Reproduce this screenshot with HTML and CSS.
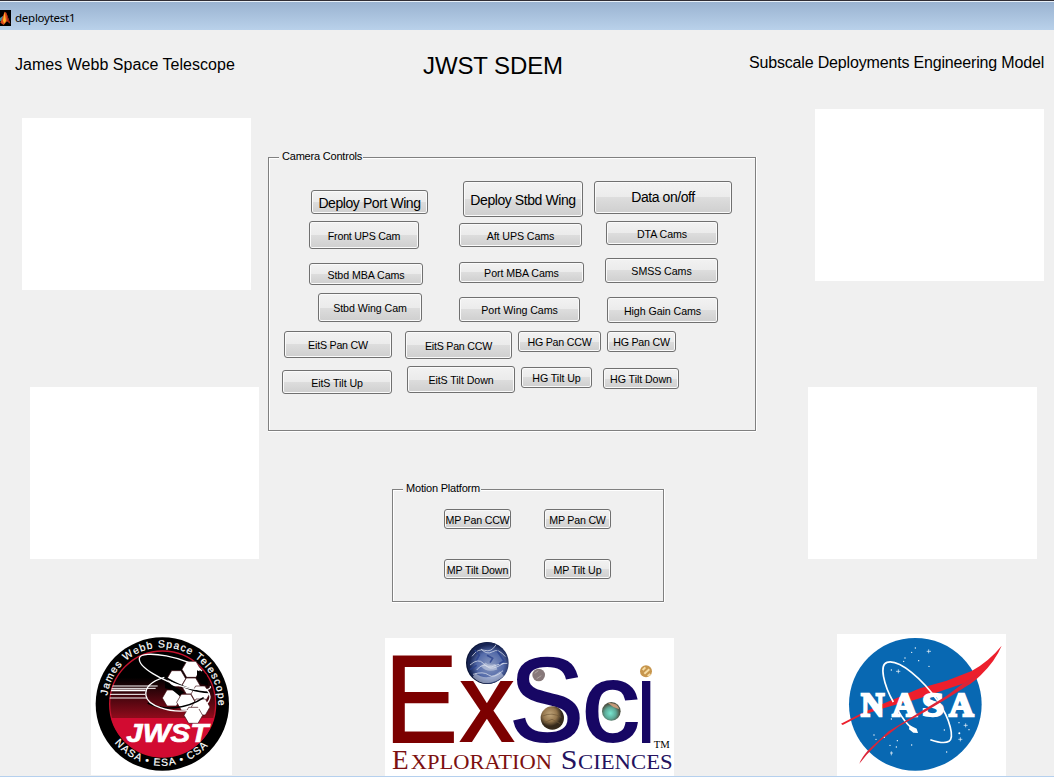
FILE: index.html
```
<!DOCTYPE html>
<html lang="en">
<head>
<meta charset="utf-8">
<title>deploytest1</title>
<link rel="stylesheet" href="styles.css">
</head>
<body>
<div class="window">
  <header class="titlebar">
    <svg class="app-icon" viewBox="0 0 33 48"><path fill="#000" d="M0 0h33v48H0z"/><path fill="#3a8ba0" d="M0 24l8-6 3 5-6 13-5-4z"/><path fill="#d9471b" d="M1 38L14 5l5 3 12 33-10-7-10 11z"/><path fill="#ffb52b" d="M14 6l4 27-6 8-3-10z"/><path fill="#8f2017" d="M19 9l12 32-8-8z"/></svg>
    <span>deploytest1</span>
  </header>
  <main class="figure">
    <section class="column left">
      <h2 class="caption">James Webb Space Telescope</h2>
      <div class="view view-tl"></div>
      <div class="view view-bl"></div>
      <svg class="logo-jwst" viewBox="18 21 423 423">
        <defs>
          <linearGradient id="sky" x1="0" y1="0" x2="0" y2="1"><stop offset=".25" stop-color="#000"/><stop offset=".62" stop-color="#8c0b1b"/></linearGradient>
          <clipPath id="disc"><circle cx="233" cy="231" r="160"/></clipPath>
          <path id="arc-top" d="M67 206A167 167 0 0 1 399 215L401 240"/>
          <path id="arc-bottom" d="M89 348A185 185 0 0 0 384 338"/>
          <path id="hex" d="M-14-24h28l14 24-14 24h-28l-14-24z"/>
        </defs>
        <path fill="#fff" d="M18 21h423v423H18z"/>
        <circle cx="232" cy="231" r="200"/>
        <circle cx="233" cy="231" r="159" fill="url(#sky)" stroke="#c3122c" stroke-width="4"/>
        <g clip-path="url(#disc)">
          <path fill="#d20b31" d="M70 273h330v130H70z"/>
          <path stroke="#fff" stroke-width="3" d="M78 177h140M76 184h136M74 202h106M73 213h112"/>
          <path stroke="#fff" stroke-width="5" d="M76 190h106"/>
        </g>
        <g fill="#fff" stroke="#3c0a10" stroke-width="2">
          <use href="#hex" x="319" y="127"/>
          <use href="#hex" x="274" y="155"/>
          <use href="#hex" x="318" y="177"/>
          <use href="#hex" x="260" y="213"/>
          <use href="#hex" x="303" y="226"/>
          <use href="#hex" x="346" y="201"/>
          <use href="#hex" x="347" y="240"/>
          <use href="#hex" x="325" y="265"/>
        </g>
        <path d="M240 162l42 24 16 10-15 10-22-18-21-4zM336 130l28 12 6 34-22-6-12-20z"/>
        <path fill="none" stroke="#000" stroke-width="5" d="M244 153c50 29 96 43 128 43M188 228c50 26 120 16 168-16"/>
        <g fill="none" stroke="#fff" stroke-width="4">
          <path d="M351 132C313 91 166 65 163 94c-3 27 68 67 131 85 56 15 86 11 82-1"/>
          <path d="M238 151c-40 12-59 31-55 55 4 29 67 52 127 45 41-5 65-23 65-42 0-12-10-24-23-28"/>
        </g>
        <g class="jwst-word" fill="#fff"><text x="124" y="346" textLength="246" lengthAdjust="spacingAndGlyphs">JWST</text></g>
        <g class="jwst-ring" fill="#fff">
          <text class="ring-top"><textPath href="#arc-top">James Webb Space Telescope</textPath></text>
          <text class="ring-bottom"><textPath href="#arc-bottom">NASA • ESA • CSA</textPath></text>
        </g>
      </svg>
    </section>

    <section class="column center">
      <h1 class="heading">JWST SDEM</h1>
      <section class="panel camera">
        <h3 class="legend">Camera Controls</h3>
        <div class="row row-deploy">
          <button class="btn large deploy-port">Deploy Port Wing</button>
          <button class="btn large deploy-stbd">Deploy Stbd Wing</button>
          <button class="btn large data">Data on/off</button>
        </div>
        <div class="row row-ups">
          <button class="btn front-ups">Front UPS Cam</button>
          <button class="btn aft-ups">Aft UPS Cams</button>
          <button class="btn dta">DTA Cams</button>
        </div>
        <div class="row row-mba">
          <button class="btn stbd-mba">Stbd MBA Cams</button>
          <button class="btn port-mba">Port MBA Cams</button>
          <button class="btn smss">SMSS Cams</button>
        </div>
        <div class="row row-wing">
          <button class="btn stbd-wing">Stbd Wing Cam</button>
          <button class="btn port-wing">Port Wing Cams</button>
          <button class="btn high-gain">High Gain Cams</button>
        </div>
        <div class="row row-pan">
          <button class="btn eits-cw">EitS Pan CW</button>
          <button class="btn eits-ccw">EitS Pan CCW</button>
          <button class="btn hg-ccw">HG Pan CCW</button>
          <button class="btn hg-cw">HG Pan CW</button>
        </div>
        <div class="row row-tilt">
          <button class="btn eits-up">EitS Tilt Up</button>
          <button class="btn eits-down">EitS Tilt Down</button>
          <button class="btn hg-up">HG Tilt Up</button>
          <button class="btn hg-down">HG Tilt Down</button>
        </div>
      </section>
      <section class="panel motion">
        <h3 class="legend">Motion Platform</h3>
        <div class="motion-grid">
          <button class="btn tight">MP Pan CCW</button>
          <button class="btn tight">MP Pan CW</button>
          <button class="btn">MP Tilt Down</button>
          <button class="btn">MP Tilt Up</button>
        </div>
      </section>
      <svg class="logo-exsci" viewBox="15 24 867 414">
        <defs>
          <radialGradient id="earth" cx=".55" cy=".55"><stop offset="0" stop-color="#8b9ac0"/><stop offset=".65" stop-color="#536aa9"/><stop offset="1" stop-color="#172453"/></radialGradient>
          <radialGradient id="mars" cx=".4" cy=".35"><stop offset="0" stop-color="#c2a77c"/><stop offset=".6" stop-color="#94764d"/><stop offset="1" stop-color="#35291b"/></radialGradient>
          <radialGradient id="titan" cx=".45" cy=".6"><stop offset="0" stop-color="#78e6cf"/><stop offset=".6" stop-color="#5ca997"/><stop offset="1" stop-color="#4e5445"/></radialGradient>
          <clipPath id="globe"><circle cx="324" cy="99" r="62"/></clipPath>
        </defs>
        <path fill="#fff" d="M15 24h867v414H15z"/>
        <g class="exsci-word">
          <text x="14" y="336" fill="#7c0000" stroke="#7c0000" font-size="371" textLength="219" lengthAdjust="spacingAndGlyphs">E</text>
          <text x="240" y="333" fill="#7c0000" stroke="#7c0000" font-size="334" textLength="162" lengthAdjust="spacingAndGlyphs">x</text>
          <text x="388" y="332" fill="#170764" stroke="#170764" font-size="356" textLength="224" lengthAdjust="spacingAndGlyphs">S</text>
          <text x="605" y="334" fill="#170764" stroke="#170764" font-size="336" textLength="174" lengthAdjust="spacingAndGlyphs">c</text>
        </g>
        <path fill="#170764" d="M786 153h25v186h-25z"/>
        <circle cx="321" cy="99" r="63" fill="#081235"/>
        <circle cx="324" cy="99" r="62" fill="url(#earth)"/>
        <g clip-path="url(#globe)" fill="none" stroke="#dce1ee">
          <path stroke-width="3" opacity=".75" d="M276 79q18-25 38-18t35-18M270 105q25-22 40-5t32 8 40-8M303 57q18 19 35 8t38 15M290 120q19-23 32-10t49-10M279 133q31-10 47 2t43-13"/>
          <path stroke-width="18" opacity=".5" d="M281 137q41 30 85-6M310 103q13 16 39 7"/>
          <path stroke="#29418d" stroke-width="5" opacity=".8" d="M284 60l14 15-9 16M321 76l17 9-8 13M351 62l21 31-15 9M270 119l20-13"/>
        </g>
        <circle cx="476" cy="135" r="19" fill="#87797a"/><path stroke="#b0a5a2" stroke-width="3" d="M464 130l11-8M470 146l14-9"/>
        <circle cx="517" cy="264" r="35" fill="url(#mars)"/><path stroke="#6e5636" fill="none" stroke-width="2" d="M488 258q28-13 56 4M492 278l24-10 25 13"/>
        <circle cx="694" cy="244" r="28" fill="url(#titan)"/><path d="M684 219q28-2 34 19l-18-7z" fill="#c49a78"/>
        <circle cx="798" cy="124" r="18" fill="#c7964d"/><path stroke="#f7dda4" stroke-width="6" d="M788 120l8-8M793 131l15-13M803 138l8-6"/>
        <g class="exsci-small">
          <g fill="#7c1010"><text x="36" y="416" font-size="84" textLength="50" lengthAdjust="spacingAndGlyphs">E</text><text x="92" y="416" font-size="66" textLength="424" lengthAdjust="spacingAndGlyphs">XPLORATION</text></g>
          <g fill="#251260"><text x="542" y="416" font-size="84" textLength="50" lengthAdjust="spacingAndGlyphs">S</text><text x="594" y="416" font-size="66" textLength="284" lengthAdjust="spacingAndGlyphs">CIENCES</text></g>
          <text x="821" y="354" font-size="31" textLength="48" lengthAdjust="spacingAndGlyphs">TM</text>
        </g>
      </svg>
    </section>

    <section class="column right">
      <h2 class="caption subscale">Subscale Deployments Engineering Model</h2>
      <div class="view view-tr"></div>
      <div class="view view-br"></div>
      <svg class="logo-nasa" viewBox="21 21 507 426">
        <path fill="#fff" d="M21 21h507v426H21z"/>
        <circle cx="256" cy="232" r="199" fill="#0868b2"/>
        <path fill="#ed1f2c" d="M33 290L90 261 150 234 220 205 270 184 350 161 425 132Q478 102 515 56 497 100 452 145 423 174 392 186L405 168 340 190 300 204 250 220 202 232 150 247 90 267 38 294z"/>
        <path fill="none" stroke="#fff" stroke-width="5" d="M190 225C161 173 147 113 171 106c37-11 108 52 153 117 38 56 49 109 33 120-10 6-33 3-56-5M204 250q18 33 41 53"/>
        <path fill="#fff" d="M239 295l21 10 4 13-14-1-13-10z"/>
        <g class="nasa-word" fill="#fff">
          <text x="93" y="267" textLength="70" lengthAdjust="spacingAndGlyphs">N</text>
          <text x="187" y="267" textLength="74" lengthAdjust="spacingAndGlyphs">A</text>
          <text x="276" y="267" textLength="66" lengthAdjust="spacingAndGlyphs">S</text>
          <text x="357" y="267" textLength="74" lengthAdjust="spacingAndGlyphs">A</text>
        </g>
        <path fill="#dc2437" d="M88 410Q94 393 115 369L176 313 280 249 350 206 405 165 450 137 400 184 350 215 284 255 207 298 150 342 110 383z"/>
        <path stroke="#fff" stroke-width="2" d="M290 73h13M296 67v12M198 133h13M205 127v12M401 295h12M407 289v12M385 337h12M391 331v12M180 378h9M184 373v12"/>
        <g fill="#fff"><circle cx="256" cy="63" r="2"/><circle cx="245" cy="76" r="2"/><circle cx="225" cy="93" r="2"/><circle cx="221" cy="103" r="2"/><circle cx="266" cy="101" r="2"/><circle cx="297" cy="118" r="2"/><circle cx="184" cy="129" r="2"/><circle cx="184" cy="276" r="2"/><circle cx="132" cy="324" r="2"/><circle cx="138" cy="337" r="2"/><circle cx="163" cy="331" r="2"/><circle cx="202" cy="341" r="2"/><circle cx="180" cy="355" r="2"/><circle cx="199" cy="360" r="2"/><circle cx="245" cy="354" r="2"/><circle cx="350" cy="375" r="2"/><circle cx="387" cy="287" r="2"/><circle cx="388" cy="319" r="3"/><circle cx="417" cy="308" r="2"/><circle cx="343" cy="309" r="2"/></g>
      </svg>
    </section>
  </main>
</div>
</body>
</html>
```
FILE: styles.css
```
* { box-sizing: border-box; }
body { margin: 0; font-family: "Liberation Sans", Arial, sans-serif; color: #000; background: #f0f0f0; }
h1, h2, h3 { margin: 0; font-weight: 400; white-space: nowrap; }
svg { display: block; flex: none; }

.window { width: 1054px; height: 777px; overflow: hidden; display: flex; flex-direction: column; border-top: 1px solid #302d35; border-bottom: 1px solid #b5d0ee; }
.titlebar { height: 29px; flex: none; display: flex; align-items: flex-start; gap: 4px; padding-top: 9px; border-top: 1px solid #e8f0f8; background: linear-gradient(#9ab3d1, #b9d1ea); font: 11.5px/17px "Noto Sans", sans-serif; letter-spacing: -.25px; }
.titlebar span { margin-top: -2px; }
.app-icon { width: 11px; height: 16px; margin-top: -1px; }
.figure { height: 746px; display: grid; grid-template-columns: 268px 489px 297px; background: #f0f0f0; }
.column { display: flex; flex-direction: column; align-items: flex-start; min-width: 0; }

.caption { font-size: 16px; line-height: 20px; margin: 25px 0 0 15px; letter-spacing: .03px; }
.subscale { margin: 23px 0 0 -8px; letter-spacing: -.17px; }
.heading { font-size: 24px; line-height: 28px; margin: 22px 0 0 155px; letter-spacing: -.1px; }
.view { width: 229px; height: 172px; background: #fff; flex: none; }
.view-tl { margin: 43px 0 0 22px; }
.view-bl { margin: 97px 0 0 30px; }
.view-tr { margin: 36px 0 0 58px; }
.view-br { margin: 106px 0 0 51px; }
.logo-jwst { width: 141px; height: 141px; margin: 75px 0 0 91px; }
.logo-nasa { width: 169px; height: 142px; margin: 75px 0 0 80px; }
.logo-exsci { width: 289px; height: 138px; margin: 36px 0 0 117px; }

.panel { flex: none; border: 1px solid #808080; box-shadow: inset 1px 1px #fff, 0 1px #fff, 1px 0 #fff; }
.legend { width: max-content; height: 12px; margin: -8px 0 0 10px; padding: 0 1px 0 3px; background: #f0f0f0; font-size: 11px; line-height: 12px; letter-spacing: -.2px; }
.camera { width: 488px; height: 274px; margin-top: 77px; }
.motion { width: 272px; height: 113px; margin: 58px 0 0 124px; }
.row { display: flex; align-items: flex-start; }
.row-deploy { height: 40px; margin-top: 19px; }
.row-ups { height: 37px; }
.row-mba { height: 35px; }
.row-wing { height: 38px; }
.row-pan { height: 35px; }
.motion-grid { display: grid; grid-template-columns: 67px 67px; grid-auto-rows: 20px; gap: 30px 33px; margin: 15px 0 0 51px; }

.btn { flex: none; margin: 0; padding: 1px 0 0; border: 1px solid #707070; border-radius: 3px; background: linear-gradient(#f2f2f2, #ebebeb 50%, #dddddd 50%, #cfcfcf); box-shadow: inset 0 0 0 1px #fafafa; font: 10.67px/12px "Liberation Sans", Arial, sans-serif; letter-spacing: -.08px; color: #000; text-align: center; white-space: nowrap; }
.row-pan .btn, .front-ups, .tight { letter-spacing: -.22px; }
.large { font-size: 14px; line-height: 16px; letter-spacing: -.42px; padding: 1px 0 0; }
.deploy-port { width: 117px; height: 24px; margin: 9px 0 0 42px; }
.deploy-stbd { width: 120px; height: 36px; margin-left: 35px; }
.data { width: 138px; height: 33px; margin-left: 11px; padding: 0 0 1px; }
.front-ups { width: 110px; height: 28px; margin-left: 40px; }
.aft-ups { width: 123px; height: 24px; margin: 2px 0 0 40px; }
.dta { width: 112px; height: 24px; margin-left: 24px; }
.stbd-mba { width: 114px; height: 22px; margin: 5px 0 0 40px; }
.port-mba { width: 125px; height: 21px; margin: 4px 0 0 36px; }
.smss { width: 113px; height: 25px; margin-left: 21px; }
.stbd-wing { width: 104px; height: 29px; margin-left: 49px; }
.port-wing { width: 121px; height: 25px; margin: 4px 0 0 37px; }
.high-gain { width: 111px; height: 26px; margin: 4px 0 0 27px; }
.eits-cw { width: 108px; height: 27px; margin-left: 15px; }
.eits-ccw { width: 107px; height: 28px; margin-left: 13px; }
.hg-ccw { width: 83px; height: 21px; margin-left: 6px; }
.hg-cw { width: 69px; height: 21px; margin-left: 6px; }
.eits-up { width: 110px; height: 24px; margin: 4px 0 0 13px; }
.eits-down { width: 108px; height: 27px; margin-left: 15px; }
.hg-up { width: 71px; height: 21px; margin: 1px 0 0 6px; }
.hg-down { width: 76px; height: 21px; margin: 2px 0 0 11px; }

.jwst-word { font: italic bold 78px "Liberation Sans", sans-serif; stroke: #fff; stroke-width: 2px; }
.jwst-ring { font-family: "Liberation Sans", sans-serif; stroke: #fff; stroke-width: .6px; }
.ring-top { font-size: 31px; letter-spacing: 3.4px; }
.ring-bottom { font-size: 31px; letter-spacing: 3.6px; }
.exsci-word { font-family: "Liberation Sans", sans-serif; stroke-width: 6px; }
.exsci-small { font-family: "Liberation Serif", serif; }
.nasa-word { font: bold 104px "Liberation Serif", serif; stroke: #fff; stroke-width: 7px; }
```
